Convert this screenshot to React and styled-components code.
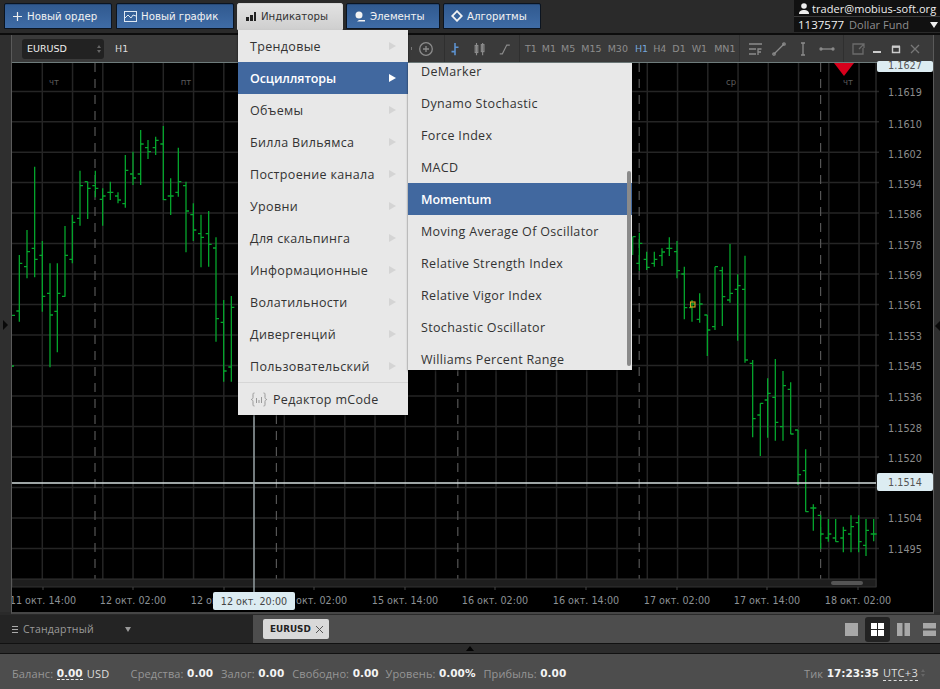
import React from "react";
import styled, { createGlobalStyle } from "styled-components";

const Global = createGlobalStyle`
  html, body { margin: 0; padding: 0; background: #2a2a2a; }
  * { box-sizing: border-box; }
  #root { width: 940px; height: 689px; overflow: hidden; }
`;

const FONT = `"Open Sans", "DejaVu Sans", sans-serif`;
const UI = `"DejaVu Sans", Verdana, sans-serif`;

const Page = styled.div`
  position: relative;
  width: 940px;
  height: 689px;
  display: flex;
  flex-direction: column;
  background: #2a2a2a;
  font-family: ${UI};
  overflow: hidden;
`;

/* ---------- top bar ---------- */
const TopBar = styled.header`
  height: 35px;
  flex: none;
  display: flex;
  align-items: flex-start;
  padding: 3px 0 0 4px;
  background: #2a2a2a;
  border-bottom: 2px solid #0c0c0c;
`;
const ActionButton = styled.button`
  height: ${p => (p.$active ? "27px" : "26px")};
  width: ${p => p.$w}px;
  margin-right: ${p => p.$gap}px;
  flex: none;
  display: flex;
  align-items: center;
  gap: 4px;
  padding: 0 0 0 ${p => p.$pad}px;
  border: 1px solid ${p => (p.$active ? "#d6d6d6" : "#0b1420")};
  border-radius: 2px 2px 0 0;
  background: ${p => (p.$active ? "linear-gradient(#e2e2e2,#cfcfcf)" : "linear-gradient(#30598f,#3f6ca6)")};
  color: ${p => (p.$active ? "#333" : "#f2f2f2")};
  font: 10.2px ${UI};
  white-space: nowrap;
  box-shadow: ${p => (p.$active ? "none" : "inset 0 1px 0 #274a78")};
`;
const UserBlock = styled.div`
  margin: -3px 0 0 auto;
  width: 146px;
  height: 32px;
  background: #111;
  display: flex;
  flex-direction: column;
`;
const UserRow = styled.div`
  height: 17px;
  display: flex;
  align-items: center;
  gap: 3px;
  padding-left: 5px;
  color: #eee;
  font: 11px ${FONT};
  letter-spacing: 0.05px;
  white-space: nowrap;
  border-bottom: 1px solid #3a3a3a;
`;
const AccountRow = styled.div`
  flex: 1;
  display: flex;
  align-items: center;
  padding: 0 1px 0 4px;
  font: 11.5px ${FONT};
  color: #f0f0f0;
  white-space: nowrap;
`;
const FundName = styled.span`
  margin-left: 5px;
  color: #8f8f8f;
  font-size: 11px;
  letter-spacing: 0.05px;
`;
const DownMark = styled.i`
  margin-left: auto;
  width: 0;
  height: 0;
  border: 4px solid transparent;
  border-top: 6px solid #eee;
  border-bottom: 0;
  margin-right: 1px;
`;

/* ---------- work area ---------- */
const Work = styled.div`
  flex: none;
  height: 580px;
  display: flex;
`;
const Gutter = styled.aside`
  flex: none;
  width: ${p => p.$w}px;
  background: #2f2f2f;
  display: flex;
  align-items: center;
  margin-bottom: 3px;
  padding: ${p => p.$pad};
  justify-content: ${p => p.$justify};
`;
const GutterMark = styled.i`
  width: 0;
  height: 0;
  margin-top: ${p => p.$top}px;
  border-top: 5px solid transparent;
  border-bottom: 5px solid transparent;
  border-${p => p.$side}: 5px solid #090909;
`;
const ChartWindow = styled.main`
  flex: 1;
  display: flex;
  flex-direction: column;
  border-left: 1px solid #5a5a5a;
  border-right: 1px solid #5a5a5a;
  border-bottom: 2px solid #464646;
  margin-bottom: 1px;
  background: #000;
  min-width: 0;
`;
const ChartBar = styled.div`
  flex: none;
  height: 28px;
  display: flex;
  align-items: center;
  background: #3a3a3a;
  border-bottom: 1px solid #6f7c7c;
  padding-left: 10px;
  color: #9a9a9a;
  font: 9.5px ${UI};
`;
const SymbolSelect = styled.div`
  width: 82px;
  height: 20px;
  background: #222;
  border-radius: 3px;
  display: flex;
  align-items: center;
  justify-content: space-between;
  padding: 0 3px 0 5px;
  color: #eee;
  font: 9.5px ${UI};
`;
const Spinner = styled.span`
  display: inline-flex;
  flex-direction: column;
  gap: 2px;
  margin-left: ${p => p.$left ?? 0}px;
  i { width: 0; height: 0; border: 2.5px solid transparent; }
  i:first-child { border-bottom: 3px solid #666; border-top: 0; }
  i:last-child { border-top: 3px solid #666; border-bottom: 0; }
`;
const Interval = styled.span`
  margin-left: ${p => p.$left ?? 0}px;
  color: ${p => (p.$on ? "#76a7dc" : p.$plain ? "#ddd" : "#8d8d8d")};
  white-space: nowrap;
`;
const Section = styled.div`
  height: 100%;
  display: flex;
  align-items: center;
  gap: ${p => p.$gap ?? 0}px;
  width: ${p => p.$w}px;
  padding-left: ${p => p.$pad ?? 0}px;
  border-left: 1px solid ${p => (p.$line ? "#2f2f2f" : "transparent")};
  flex: none;
`;
const Spring = styled.div`
  flex: 1;
`;
const SmallTick = styled.i`
  width: 1px;
  height: 3px;
  background: #777;
`;
const ToolGlyph = styled.svg`
  width: ${p => p.$w ?? 16}px;
  height: 16px;
  flex: none;
  fill: none;
  stroke: ${p => p.$c ?? "#8c8c8c"};
  stroke-width: 1.3;
`;
const Plot = styled.div`
  position: relative;
  flex: 1;
`;
const ChartSvg = styled.svg`
  display: block;
  width: 921px;
  height: 549px;
`;
const PriceTag = styled.div`
  position: absolute;
  left: 865px;
  top: ${p => p.$top}px;
  width: 56px;
  height: ${p => p.$h}px;
  padding-bottom: ${p => p.$pb ?? 0}px;
  border-radius: 2px;
  background: #dcecf2;
  color: #555;
  font: 9.7px ${UI};
  display: flex;
  align-items: center;
  justify-content: center;
`;
const TimeTag = styled.div`
  position: absolute;
  left: 201px;
  top: 529px;
  width: 82px;
  height: 18px;
  background: #dcecf2;
  border-radius: 2px;
  color: #444;
  font: 9.6px ${UI};
  display: flex;
  align-items: center;
  justify-content: center;
`;

/* ---------- menus ---------- */
const Menu = styled.nav`
  position: absolute;
  left: 238px;
  top: 30px;
  width: 170px;
  height: 385px;
  background: #e8e8e8;
  box-shadow: 0 1px 2px rgba(0, 0, 0, 0.6);
  font-family: ${FONT};
  z-index: 3;
`;
const MenuItem = styled.div`
  height: 32px;
  display: flex;
  align-items: center;
  justify-content: space-between;
  padding: 0 12px 0 ${p => p.$inset ?? 12}px;
  font-size: 12.5px;
  letter-spacing: ${p => (p.$on ? "-0.1px" : "0.33px")};
  white-space: nowrap;
  background: ${p => (p.$on ? "#41689f" : "transparent")};
  color: ${p => (p.$on ? "#fff" : "#333")};
  font-weight: ${p => (p.$on ? 600 : 400)};
`;
const Chevron = styled.i`
  width: 0;
  height: 0;
  border-top: 4px solid transparent;
  border-bottom: 4px solid transparent;
  border-left: 7px solid ${p => (p.$on ? "#fff" : "#d4d4d4")};
`;
const EditorItem = styled(MenuItem)`
  height: 33px;
  border-top: 1px solid #d6d6d6;
  justify-content: flex-start;
  gap: 5px;
`;
const SubMenu = styled.div`
  position: absolute;
  left: 408px;
  top: 63px;
  width: 224px;
  height: 307px;
  overflow: hidden;
  background: #e8e8e8;
  font-family: ${FONT};
  z-index: 4;
  box-shadow: 0 1px 2px rgba(0, 0, 0, 0.6);
`;
const SubList = styled.div`
  margin-top: -8px;
`;
const ScrollThumb = styled.div`
  position: absolute;
  right: 1px;
  top: 108px;
  width: 4px;
  height: 195px;
  background: #8a8a8a;
  border-radius: 2px;
`;

/* ---------- tabs / status ---------- */
const TabBar = styled.section`
  flex: none;
  height: 28px;
  display: flex;
  background: #4d4d4d;
`;
const TemplatePicker = styled.div`
  width: 253px;
  height: 100%;
  flex: none;
  background: #242424;
  display: flex;
  align-items: center;
  padding-left: 11px;
  color: #9a9a9a;
  font: 10.5px ${FONT};
  letter-spacing: 0.2px;
`;
const PickerArrow = styled.i`
  margin-left: 31px;
  width: 0;
  height: 0;
  border: 3.5px solid transparent;
  border-top: 5px solid #999;
  border-bottom: 0;
`;
const Tab = styled.div`
  margin: 4px 0 0 10px;
  width: 66px;
  height: 20px;
  background: #d9d9d9;
  border-radius: 2px;
  color: #222;
  font: bold 8.8px ${UI};
  display: flex;
  align-items: center;
  justify-content: space-between;
  padding: 0 4px 0 7px;
`;
const LayoutGroup = styled.div`
  margin: 0 -2px 0 auto;
  display: flex;
  align-items: center;
  height: 100%;
`;
const LayoutButton = styled.div`
  width: ${p => (p.$on ? "25px" : "26px")};
  height: 25px;
  margin: 0 ${p => (p.$on ? "0.5px" : "0")};
  border-radius: 3px;
  background: ${p => (p.$on ? "#232323" : "transparent")};
  display: flex;
  align-items: center;
  justify-content: center;
`;
const Divider = styled.div`
  flex: none;
  height: 11px;
  background: #2c2c2c;
  border-top: 1px solid #111;
  border-bottom: 1px solid #111;
  display: flex;
  justify-content: center;
`;
const UpMark = styled.i`
  margin-top: 2px;
  width: 0;
  height: 0;
  border: 4px solid transparent;
  border-bottom: 5px solid #050505;
  border-top: 0;
`;
const StatusBar = styled.footer`
  flex: 1;
  background: #4d4d4d;
  display: flex;
  align-items: center;
  padding: 3px 15px 0 12px;
  font: 11px ${FONT};
  letter-spacing: 0.12px;
  color: #969696;
`;
const Stat = styled.span`
  margin-left: ${p => (p.$push ? "auto" : `${p.$left ?? 0}px`)};
  white-space: nowrap;
  display: inline-flex;
  align-items: center;
`;
const Val = styled.b`
  margin-left: 3.5px;
  color: #f4f4f4;
  font-family: ${UI};
  font-size: 10.5px;
  letter-spacing: 0;
  border-bottom: ${p => (p.$dash ? "1px dashed #eee" : "0")};
`;
const Plain = styled.span`
  margin-left: ${p => p.$left ?? 4}px;
  color: #ddd;
  letter-spacing: 0.3px;
  border-bottom: ${p => (p.$dash ? "1px dashed #ddd" : "0")};
`;

/* ---------- chart data (page coordinates) ---------- */
const left = [
  [58,465,665,633,490],[81,390,535,500,455],[104,200,532,445,478],[127,423,635,466,589],
  [150,490,802,580,645],[172,490,757,634,580],[195,378,590,589,466],[217,345,490,478,367],
  [240,212,377,355,257],[263,245,357,245,265],[286,212,292,257,265],[308,265,377,298,288],
  [331,245,300,277,277],[354,277,310,288,300],[376,165,323,311,211],[399,155,255,222,234],
  [422,90,255,222,132],[444,120,177,143,155],[467,110,165,143,121],[490,78,300,132,299],
  [512,235,345,288,288],[535,143,290,277,245],[558,245,457,257,333],[580,310,423,344,390],
  [603,344,502,401,412],[626,333,500,401,433],[648,412,725,444,656],[671,600,845,667,813],
  [694,588,845,801,622],
].map(([x,t,b,o,c]) => [x/3, t/3+100, b/3+100, o/3+100, c/3+100]);
const mid = [
  [8,20,75,50,20],[28,8,122,100,40],[50,65,120,88,112],[73,65,110,100,88],[96,55,108,77,66],
  [118,22,78,55,55],[141,33,145,65,122],[163,110,268,132,233],[186,210,275,233,222],
  [209,190,278,268,222],[232,255,378,255,300],[255,110,300,290,110],[277,110,288,122,200],
  [300,42,218,210,190],[323,133,332,178,167],[345,77,398,178,390],
].map(([x,t,b,o,c]) => [x/3+630, t/3+230, b/3+230, o/3+230, c/3+230]);
const right = [
  [38,-30,202,-20,146],[61,100,258,135,100],[83,25,203,90,70],[106,-33,212,82,157],
  [129,3,212,170,47],[152,37,193,58,192],[174,180,345,180,314],[197,238,425,302,425],
  [220,403,482,414,414],[242,436,537,436,492],[265,447,515,504,492],[287,447,515,504,515],
  [310,470,547,504,481],[333,436,547,492,470],[356,436,547,458,515],[378,447,558,526,481],
  [401,447,514,492,492],
].map(([x,t,b,o,c]) => [x/3+740, t/3+370, b/3+370, o/3+370, c/3+370]);
const bars = [...left, ...mid, ...right];

const hLines = [91.5,121.8,152.2,182.6,213,243.6,274,304.6,335,365.6,396,426.6,457,487.4,518,548.4];
const vLines = Array.from({ length: 28 }, (_, i) => 42.3 + i * 30.25);
const dashed = [95, 276.4, 457.8, 639.2, 820.6];
const prices = [
  ["1.1619",92],["1.1610",124],["1.1602",154],["1.1594",184],["1.1586",214],["1.1578",245],
  ["1.1569",275],["1.1561",305],["1.1553",336],["1.1545",366],["1.1536",397],["1.1528",428],
  ["1.1520",458],["1.1504",518],["1.1495",549],
];
const times = [
  ["11 окт. 14:00",43],["12 окт. 02:00",133],["12 окт. 14:00",224],["15 окт. 02:00",314],
  ["15 окт. 14:00",405],["16 окт. 02:00",495],["16 окт. 14:00",586],["17 окт. 02:00",677],
  ["17 окт. 14:00",767],["18 окт. 02:00",858],
];
const days = [["чт",54],["пт",186],["ср",731],["чт",848]];

const Chart = () => (
  <ChartSvg viewBox="12 63 921 549">
    <rect x="12" y="63" width="921" height="549" fill="#000" />
    <g stroke="#252525" strokeWidth="1.5">
      {hLines.map(y => <line key={y} x1="12" x2="879" y1={y} y2={y} />)}
      {vLines.map(x => <line key={x} x1={x} x2={x} y1="63" y2="579" />)}
    </g>
    <g stroke="#555" strokeWidth="1.2" strokeDasharray="9 7">
      {dashed.map(x => <line key={x} x1={x} x2={x} y1="63" y2="579" />)}
    </g>
    <line x1="876" x2="876" y1="63" y2="587" stroke="#3a3a3a" />
    <g stroke="#05a52c" strokeWidth="1.3" fill="none">
      <path d="M12 315.3h3M12 367v-1h2" />
      {bars.map(([x, t, b, o, c], i) => (
        <path key={i} d={`M${x} ${t}V${b}M${x - 3} ${o}H${x}M${x} ${c}H${x + 3}`} />
      ))}
    </g>
    <rect x="690.5" y="302" width="4.5" height="5" fill="none" stroke="#e0a020" strokeWidth="1.1" />
    <path d="M834 63h20l-10 13z" fill="#d8001c" />
    <g fill="#5c5c5c" fontFamily={UI} fontSize="8.5" textAnchor="middle">
      {days.map(([d, x]) => <text key={x} x={x} y="85">{d}</text>)}
    </g>
    <g fill="#8c8c8c" fontFamily={UI} fontSize="9.7" textAnchor="middle">
      {prices.map(([p, y]) => <text key={p} x="905" y={y + 3.5}>{p}</text>)}
    </g>
    <rect x="12" y="579" width="864" height="8" fill="#1e1e1e" stroke="#333" strokeWidth="1" />
    <rect x="831" y="581" width="32" height="4" rx="2" fill="#555" />
    <g stroke="#444">
      {times.map(([, x]) => <line key={x} x1={x} x2={x} y1="587" y2="590" />)}
    </g>
    <g fill="#8c9296" fontFamily={UI} fontSize="9.6" textAnchor="middle">
      {times.map(([t, x]) => <text key={t} x={x} y="603.5">{t}</text>)}
    </g>
    <line x1="12" x2="876" y1="483" y2="483" stroke="#d5dede" strokeWidth="1.6" />
    <line x1="254" x2="254" y1="400" y2="592" stroke="#9aa5a8" strokeWidth="1.4" />
  </ChartSvg>
);

const mainMenu = ["Трендовые","Осцилляторы","Объемы","Билла Вильямса","Построение канала","Уровни","Для скальпинга","Информационные","Волатильности","Дивергенций","Пользовательский"];
const subMenu = ["DeMarker","Dynamo Stochastic","Force Index","MACD","Momentum","Moving Average Of Oscillator","Relative Strength Index","Relative Vigor Index","Stochastic Oscillator","Williams Percent Range"];
const intervals = [["T1",0],["M1",5],["M5",5],["M15",6],["M30",6],["H1",7],["H4",5],["D1",6],["W1",6],["MN1",7]];

export default function App() {
  return (
    <Page>
      <Global />
      <TopBar>
        <ActionButton $w={108} $gap={4} $pad={7}>
          <svg width="11" height="11" viewBox="0 0 11 11" stroke="#eee" strokeWidth="1.2"><path d="M5.5 1v9M1 5.5h9" /></svg>
          Новый ордер
        </ActionButton>
        <ActionButton $w={118} $gap={3} $pad={7}>
          <svg width="13" height="11" viewBox="0 0 13 11" fill="none" stroke="#dfe8f2" strokeWidth="1"><rect x=".5" y=".5" width="12" height="10" /><path d="M1 7l3-3 3 3 2-3 3 1" /></svg>
          Новый график
        </ActionButton>
        <ActionButton $active $w={106} $gap={3} $pad={7}>
          <svg width="12" height="11" viewBox="0 0 12 11" fill="#222"><path d="M1 6h3v4H1zM5 4h3v6H5zM9 1h2v9H9z" /></svg>
          <span>Индикаторы</span>
        </ActionButton>
        <ActionButton $w={94} $gap={3} $pad={7}>
          <svg width="12" height="11" viewBox="0 0 12 11" fill="#f2f2f2"><circle cx="5" cy="4" r="3.5" /><path d="M5 9h6v1.5H3z" /></svg>
          Элементы
        </ActionButton>
        <ActionButton $w={98} $gap={0} $pad={7}>
          <svg width="12" height="12" viewBox="0 0 12 12" fill="none" stroke="#f2f2f2" strokeWidth="1.8"><path d="M6 1.2L10.8 6 6 10.8 1.2 6z" /></svg>
          Алгоритмы
        </ActionButton>
        <UserBlock>
          <UserRow>
            <svg width="10" height="11" viewBox="0 0 10 11" fill="#eee"><circle cx="5" cy="3" r="2.8" /><path d="M0 11c0-3 2-4 5-4s5 1 5 4z" /></svg>
            trader@mobius-soft.org
          </UserRow>
          <AccountRow>
            1137577<FundName>Dollar Fund</FundName><DownMark />
          </AccountRow>
        </UserBlock>
      </TopBar>

      <Work>
        <Gutter $w={11} $justify="flex-start" $pad="0 0 0 3px"><GutterMark $side="left" $top={2} /></Gutter>
        <ChartWindow>
          <ChartBar>
            <SymbolSelect>EURUSD<Spinner><i /><i /></Spinner></SymbolSelect>
            <Interval $plain $left={11}>H1</Interval>
            <Spring />
            <Section $w={40} $pad={6} $gap={6}>
              <SmallTick />
              <ToolGlyph viewBox="0 0 16 16"><circle cx="8" cy="8" r="6.3" /><path d="M8 5v6M5 8h6" /></ToolGlyph>
            </Section>
            <Section $w={75} $line $pad={3} $gap={11}>
              <ToolGlyph viewBox="0 0 16 16" $c="#5d93d1" $w={14}><path d="M8 1v14M4 11H8M8 6h4" strokeWidth="1.8" /></ToolGlyph>
              <ToolGlyph viewBox="0 0 16 16" $w={14}><path d="M4 1v14M11 1v14" /><rect x="2.500" y="4" width="3" height="8" /><rect x="9.500" y="3" width="3" height="8" /></ToolGlyph>
              <ToolGlyph viewBox="0 0 16 16" $w={14}><path d="M2 13.500h3L10 3.500h3.500" /></ToolGlyph>
            </Section>
            <Section $w={220} $line $pad={5}>
              {intervals.map(([t, l]) => <Interval key={t} $left={l} $on={t === "H1"}>{t}</Interval>)}
            </Section>
            <Section $w={104} $line $pad={7} $gap={8}>
              <ToolGlyph viewBox="0 0 16 16"><path d="M2 3h13M2 8h7M2 13h7M11 14V8h3.500M11 11h3" /></ToolGlyph>
              <ToolGlyph viewBox="0 0 16 16"><path d="M3 13L13 3" /><circle cx="3" cy="13" r="1.2" /><circle cx="13" cy="3" r="1.2" /></ToolGlyph>
              <ToolGlyph viewBox="0 0 16 16"><path d="M8 2v12M6 2h4M6 14h4" /></ToolGlyph>
              <ToolGlyph viewBox="0 0 16 16"><path d="M2 8h12" /><circle cx="2" cy="8" r="1" /><circle cx="14" cy="8" r="1" /></ToolGlyph>
            </Section>
            <Section $w={90} $line $pad={6} $gap={3}>
              <ToolGlyph viewBox="0 0 16 16" $c="#6b6b6b"><path d="M10 3H3v10h10V7M9 8l5-5M10 3h4v4" /></ToolGlyph>
              <ToolGlyph viewBox="0 0 16 16" $c="#ccc"><path d="M4 11h8" strokeWidth="2" /></ToolGlyph>
              <ToolGlyph viewBox="0 0 16 16" $c="#ccc"><path d="M4.500 6h7v5.500h-7z" strokeWidth="1.4" /><path d="M4 5.500h8" strokeWidth="2" /></ToolGlyph>
              <ToolGlyph viewBox="0 0 16 16" $c="#777"><path d="M4 4l8 8M12 4L4 12" /></ToolGlyph>
            </Section>
          </ChartBar>
          <Plot>
            <Chart />
            <PriceTag $top={-2} $h={11} $pb={3}>1.1627</PriceTag>
            <PriceTag $top={410} $h={18}>1.1514</PriceTag>
            <TimeTag>12 окт. 20:00</TimeTag>
          </Plot>
        </ChartWindow>
        <Gutter $w={6} $justify="flex-end" $pad="0"><GutterMark $side="right" $top={4} /></Gutter>
      </Work>

      <TabBar>
        <TemplatePicker>
          <svg width="9" height="9" viewBox="0 0 9 9" stroke="#aaa" strokeWidth="1.1"><path d="M1 1.500h6M1 4.500h6M1 7.500h6" /></svg>
          <Stat $left={3}>Стандартный</Stat>
          <PickerArrow />
        </TemplatePicker>
        <Tab>EURUSD
          <svg width="11" height="11" viewBox="0 0 11 11" stroke="#555" strokeWidth="1"><path d="M2 2l7 7M9 2l-7 7" /></svg>
        </Tab>
        <LayoutGroup>
          <LayoutButton>
            <svg width="13" height="13" fill="#a8a8a8"><rect width="13" height="13" /></svg>
          </LayoutButton>
          <LayoutButton $on>
            <svg width="13" height="13" fill="#fff"><path d="M0 0h6v6H0zM7 0h6v6H7zM0 7h6v6H0zM7 7h6v6H7z" /></svg>
          </LayoutButton>
          <LayoutButton>
            <svg width="13" height="13" fill="#a8a8a8"><path d="M0 0h5.500v13H0zM7.500 0h5.500v13H7.500z" /></svg>
          </LayoutButton>
          <LayoutButton>
            <svg width="13" height="13" fill="#a8a8a8"><path d="M0 0h13v5.500H0zM0 7.500h13v5.500H0z" /></svg>
          </LayoutButton>
        </LayoutGroup>
      </TabBar>
      <Divider><UpMark /></Divider>
      <StatusBar>
        <Stat>Баланс:<Val $dash>0.00</Val><Plain>USD</Plain></Stat>
        <Stat $left={21}>Средства:<Val>0.00</Val></Stat>
        <Stat $left={8}>Залог:<Val>0.00</Val></Stat>
        <Stat $left={8}>Свободно:<Val>0.00</Val></Stat>
        <Stat $left={7}>Уровень:<Val>0.00%</Val></Stat>
        <Stat $left={8}>Прибыль:<Val>0.00</Val></Stat>
        <Stat $push>Тик<Val>17:23:35</Val><Plain $dash>UTC+3</Plain><Spinner $left={3}><i /><i /></Spinner></Stat>
      </StatusBar>

      <Menu>
        {mainMenu.map((m, i) => (
          <MenuItem key={m} $on={i === 1}>{m}<Chevron $on={i === 1} /></MenuItem>
        ))}
        <EditorItem>
          <svg width="18" height="15" viewBox="0 0 18 15" fill="none" stroke="#999" strokeWidth="1"><path d="M4.500 1H4C3 1 3 2 3 3v2.500C3 6.500 2 7.500 1 7.500c1 0 2 1 2 2V12c0 1 0 2 1 2h.5M13.500 1H14c1 0 1 1 1 2v2.500c0 1 1 2 2 2-1 0-2 1-2 2V12c0 1 0 2-1 2h-.5M6.500 6v5M9 8v3M11.500 5v6" /></svg>
          Редактор mCode
        </EditorItem>
      </Menu>
      <SubMenu>
        <SubList>
          {subMenu.map(m => <MenuItem key={m} $inset={13} $on={m === "Momentum"}>{m}</MenuItem>)}
        </SubList>
        <ScrollThumb />
      </SubMenu>
    </Page>
  );
}
